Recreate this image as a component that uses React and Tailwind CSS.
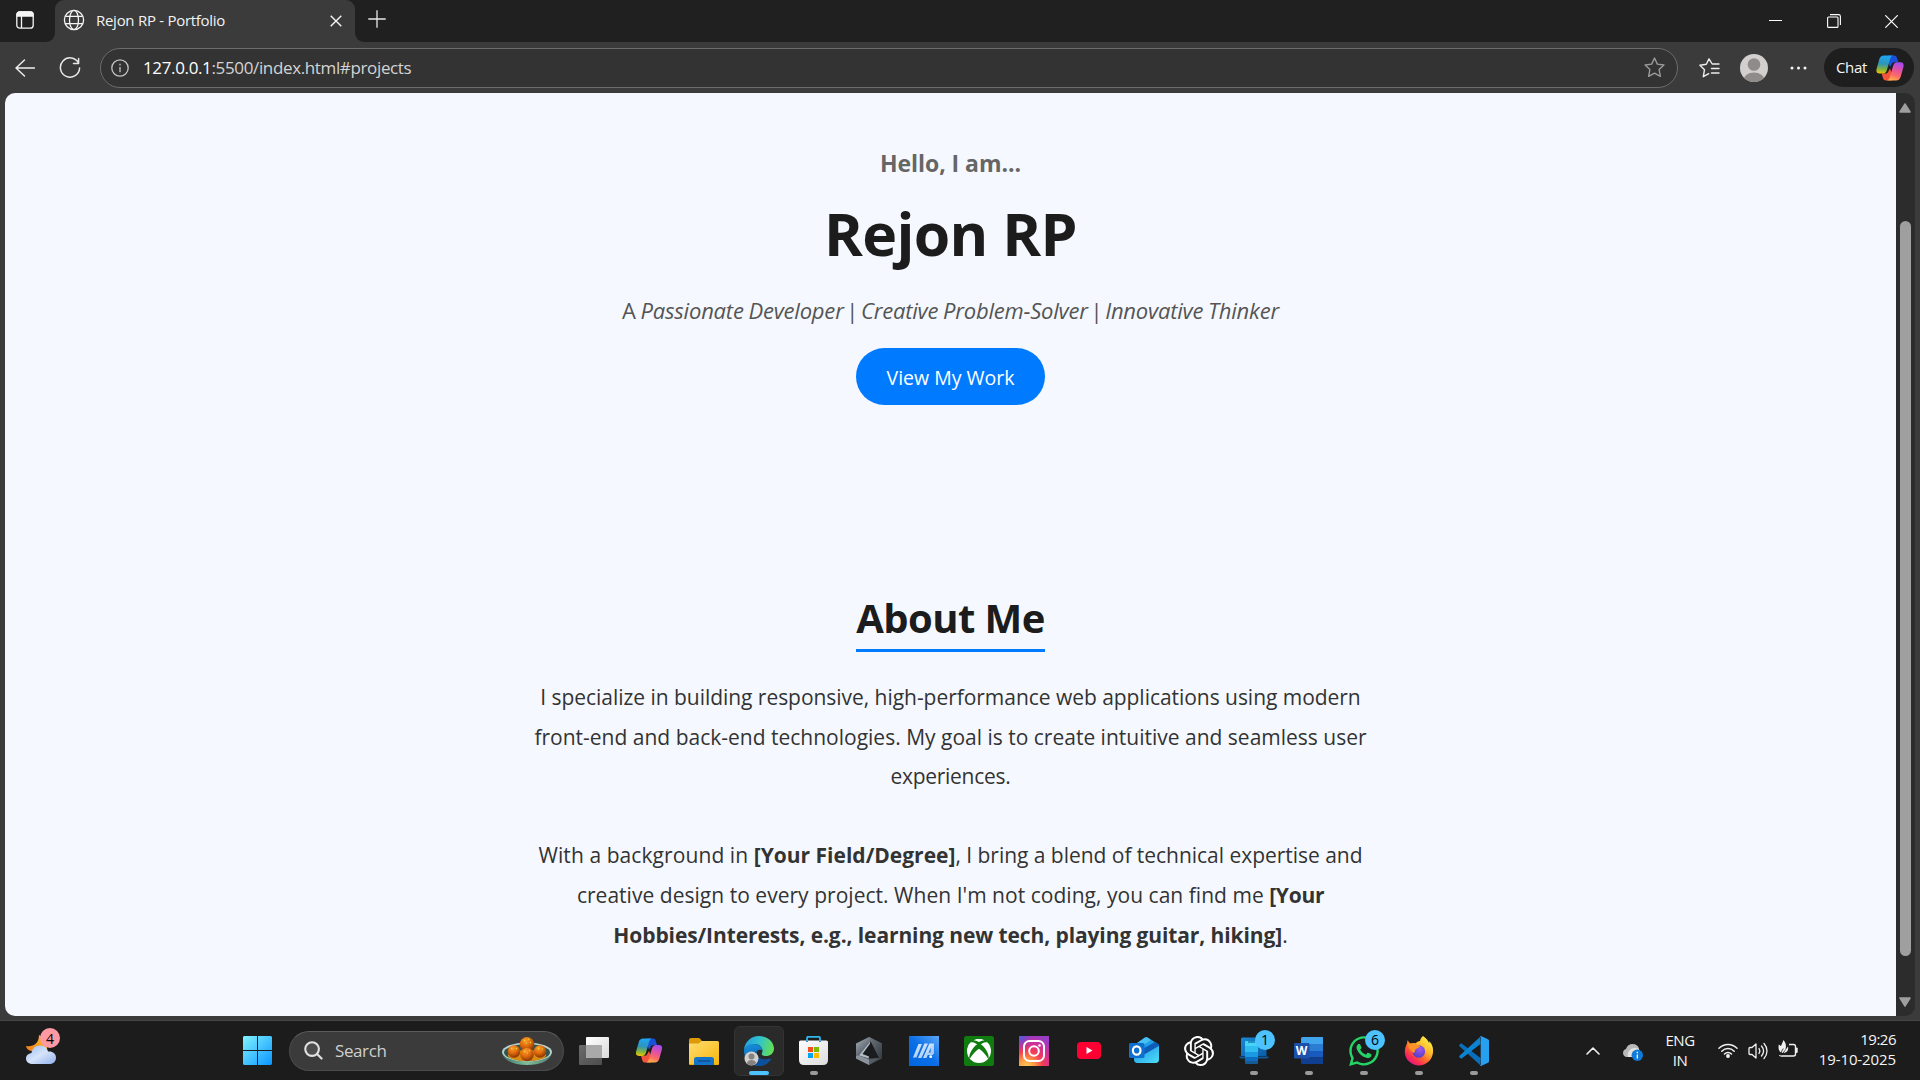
import { SiOpenai } from "react-icons/si";
import { FaWhatsapp } from "react-icons/fa";

function CopilotLogo({ id, className }) {
  return (
    <svg viewBox="0 0 28 26" className={className}>
      <defs>
        <linearGradient id={id + "a"} x1="0.3" y1="0" x2="0.2" y2="1">
          <stop offset="0.05" stopColor="#1fa5ee" />
          <stop offset="0.45" stopColor="#2f94b8" />
          <stop offset="0.75" stopColor="#84b43c" />
          <stop offset="1" stopColor="#f2c500" />
        </linearGradient>
        <linearGradient id={id + "b"} x1="0.7" y1="0" x2="0.4" y2="1">
          <stop offset="0" stopColor="#a24bf0" />
          <stop offset="0.45" stopColor="#e8529c" />
          <stop offset="0.75" stopColor="#fb6f62" />
          <stop offset="1" stopColor="#ffae4d" />
        </linearGradient>
      </defs>
      <path d="M12 .5h6c1.800 0 2.500.8 3 2.500l1.300 4.300h-3.300c-2 0-3 .8-3.600 2.500L14 12 11 4z" fill="#1b50d8" />
      <path d="M16 25.500h-6c-1.800 0-2.600-1-3.100-2.700L5.700 18.500H9c2 0 3-.8 3.600-2.600l1.400-2.400 3 8z" fill="#f4533e" />
      <path d="M8 .5h9c-1.800.6-2.500 2.200-3 4l-3 10.200c-.8 2.700-2 3.900-4.200 3.900H3.600C.8 18.600-.1 16.600.6 14L3.300 4.300C4 1.900 5.500.5 8 .5z" fill={"url(#" + id + "a)"} />
      <path d="M20 25.500h-9c1.800-.6 2.500-2.200 3-4l3-10.300c.8-2.700 2-3.900 4.200-3.900h3.200c2.800 0 3.700 2 3 4.600l-2.700 9.800c-.7 2.400-2.200 3.800-4.700 3.800z" fill={"url(#" + id + "b)"} />
    </svg>
  );
}

function TabBar() {
  return (
    <div className="flex h-[42px] bg-[#3b3b3b]">
      <div className="flex w-[55px] items-center rounded-br-[9px] bg-[#202020] pl-4">
        <svg viewBox="0 0 18 18" className="-mt-0.5 size-[18px]" fill="none" stroke="#f5f5f5" strokeWidth="1.3">
          <rect x=".8" y=".8" width="16.400" height="16.400" rx="3" />
          <path d="M1 3.500c0-1.500 1-2.500 2.500-2.500h11C16 1 17 2 17 3.500V5H1z" fill="#f5f5f5" />
          <path d="M5.500 5v12" />
        </svg>
      </div>
      <div className="flex w-[300px] bg-[#202020]">
        <div className="flex w-full items-center rounded-t-[9px] bg-[#3b3b3b] pr-[13px] pb-0.5 pl-2">
          <svg viewBox="0 0 22 22" className="size-[22px]" fill="none" stroke="#f5f5f5" strokeWidth="1.300">
            <circle cx="11" cy="11" r="9.600" />
            <ellipse cx="11" cy="11" rx="4.500" ry="9.600" />
            <path d="M2.500 7.300h17M2.500 14.700h17" />
          </svg>
          <span className="ml-[11px] text-[15px] tracking-[-0.28px] text-[#f2f2f2]">Rejon RP - Portfolio</span>
          <svg viewBox="0 0 12 12" className="mt-px ml-auto size-3" fill="none" stroke="#f5f5f5" strokeWidth="1.4">
            <path d="M.7.700l10.600 10.600M11.300.700L.7 11.300" />
          </svg>
        </div>
      </div>
      <div className="flex flex-1 items-center rounded-bl-[9px] bg-[#202020] pl-[13px]">
        <svg viewBox="0 0 18 18" className="-mt-1 size-[18px]" stroke="#e8e8e8" strokeWidth="1.3">
          <path d="M9 .300v17.400M.3 9h17.400" />
        </svg>
        <div className="ml-auto flex items-center pr-[22px]">
          <svg viewBox="0 0 13 13" className="size-[13px]" stroke="#fff" fill="none"><path d="M0 5.500h13" /></svg>
          <svg viewBox="0 0 14 14" className="ml-[45px] size-[14px]" stroke="#fff" fill="none" strokeWidth="1.100">
            <rect x=".6" y="3" width="10.400" height="10.400" rx="1" />
            <path d="M3 .600h8.500q1.900 0 1.900 1.900V11" />
          </svg>
          <svg viewBox="0 0 13 13" className="ml-[44px] size-[13px]" stroke="#fff" fill="none" strokeWidth="1.200">
            <path d="M.3.300l12.400 12.400M12.700.300L.3 12.700" />
          </svg>
        </div>
      </div>
    </div>
  );
}

function Toolbar() {
  return (
    <div className="flex h-[51px] items-center bg-[#3b3b3b] pr-[6px] pl-[15px]">
      <svg viewBox="0 0 20 18" className="h-[18px] w-5" fill="none" stroke="#f0f0f0" strokeWidth="1.400" strokeLinecap="round" strokeLinejoin="round">
        <path d="M9.500 1L1 9l8.500 8M1.500 9h18" />
      </svg>
      <svg viewBox="0 0 22 22" className="ml-6 size-[22px]" fill="none" stroke="#e8e8e8" strokeWidth="1.500" strokeLinecap="round" strokeLinejoin="round">
        <path d="M19.500 6A9.600 9.600 0 1 0 20.600 11M19.600 1.500V6.500H14.500" />
      </svg>
      <div className="ml-[19px] flex h-10 w-[1578px] items-center rounded-full border border-[#6c6c6c] bg-[#333333] pr-3 pl-[10px]">
        <svg viewBox="0 0 18 18" className="size-[18px]" fill="none" stroke="#c4c4c4" strokeWidth="1.300">
          <circle cx="9" cy="9" r="8.200" />
          <path d="M9 8v5.200M9 4.800v1.600" />
        </svg>
        <span className="ml-[14px] text-[17px] tracking-[-0.36px] text-[#d4d4d4]">
          <span className="text-white">127.0.0.1</span>:5500/index.html#projects
        </span>
        <svg viewBox="0 0 20 20" className="ml-auto size-[21px]" fill="none" stroke="#9b9b9b" strokeWidth="1.300" strokeLinejoin="round">
          <path d="M10 1l2.700 5.800 6.300.8-4.600 4.400 1.200 6.400L10 15.300l-5.600 3.100 1.200-6.400L1 7.600l6.300-.8z" />
        </svg>
      </div>
      <svg viewBox="0 0 21 20" className="ml-[21px] h-5 w-[21px]" fill="none" stroke="#ededed" strokeWidth="1.400" strokeLinejoin="round" strokeLinecap="round">
        <path d="M20 6h-6.800L10 .900 7.300 6.200.9 7.200l4.600 4.500-1.200 7 5.400-3M12.500 10.500H20M12.500 15H20" />
      </svg>
      <svg viewBox="0 0 28 28" className="ml-[20px] size-[28px]">
        <clipPath id="person"><circle cx="14" cy="14" r="14" /></clipPath>
        <g clipPath="url(#person)">
          <rect width="28" height="28" fill="#d2d0ce" />
          <circle cx="14" cy="10.500" r="6.300" fill="#8f8b88" />
          <ellipse cx="14" cy="26" rx="10.500" ry="7.500" fill="#8f8b88" />
        </g>
      </svg>
      <svg viewBox="0 0 17 4" className="ml-[22px] h-1 w-[17px]" fill="#f5f5f5">
        <circle cx="2" cy="2" r="1.500" /><circle cx="8.500" cy="2" r="1.500" /><circle cx="15" cy="2" r="1.500" />
      </svg>
      <div className="ml-auto flex h-[39px] w-[90px] items-center rounded-full bg-[#1e1e1e] pl-3">
        <span className="text-[15px] tracking-[-0.33px] text-[#f5f5f5]">Chat</span>
        <CopilotLogo id="chat" className="ml-[9px] h-[26px] w-7" />
      </div>
    </div>
  );
}

function Portfolio() {
  return (
    <main className="flex w-[1891px] flex-col items-center overflow-hidden rounded-l-[10px] bg-[#f5f9ff] text-[#333333]">
      <p className="mt-[52px] text-[23px]/[36px] font-bold tracking-[-0.05px] text-[#666666]">Hello, I am...</p>
      <h1 className="mt-[12px] text-[59px]/[80px] font-bold tracking-[-0.7px] text-[#1c1c1c]">Rejon RP</h1>
      <p className="mt-[17px] text-[22px]/[40px] tracking-[-0.2px] [word-spacing:-0.8px] whitespace-nowrap text-[#555555]">
        A <i>Passionate Developer</i><span className="mx-[-2px]"> | </span><i>Creative Problem-Solver</i><span className="mx-[-2px]"> | </span><i>Innovative Thinker</i>
      </p>
      <button className="mt-[18px] h-[57px] w-[189px] rounded-full bg-[#007bff] pt-[3px] text-[19.5px] text-white">View My Work</button>
      <h2 className="mt-[185px] border-b-3 border-[#007bff] pb-[3px] text-[40px]/[56px] font-bold tracking-[-0.58px] text-[#1c1c1c]">About Me</h2>
      <div className="mt-[26px] text-center text-[21px]/[39.6px] whitespace-nowrap">
        <p>
          <span className="tracking-[-0.04px]">I specialize in building responsive, high-performance web applications using modern</span>
          <br />
          front-end and back-end technologies. My goal is to create intuitive and seamless user
          <br />
          <span className="tracking-[-0.3px]">experiences.</span>
        </p>
        <p className="mt-[39.6px]">
          <span className="tracking-[0.08px]">With a background in </span><b>[Your Field/Degree]</b><span className="tracking-[-0.03px]">, I bring a blend of technical expertise and</span>
          <br />
          <span className="tracking-[0.03px]">creative design to every project. When I'm not coding, you can find me </span><b className="tracking-[-0.3px]">[Your</b>
          <br />
          <b className="tracking-[-0.1px]">Hobbies/Interests, e.g., learning new tech, playing guitar, hiking]</b>.
        </p>
      </div>
    </main>
  );
}

function Scrollbar() {
  return (
    <div className="flex w-[19px] flex-col items-center rounded-r-[10px] bg-[#2c2c2c] pt-[10px] pb-[9px]">
      <svg viewBox="0 0 12 10" className="mr-px h-[10px] w-3" fill="#9f9f9f" stroke="#9f9f9f" strokeWidth="1.500" strokeLinejoin="round"><path d="M6 1l5 8H1z" /></svg>
      <div className="mt-[108px] h-[735px] w-[11px] rounded-full bg-[#9f9f9f]" />
      <svg viewBox="0 0 12 10" className="mt-auto mr-px h-[10px] w-3" fill="#9f9f9f" stroke="#9f9f9f" strokeWidth="1.500" strokeLinejoin="round"><path d="M6 9L1 1h10z" /></svg>
    </div>
  );
}

function SearchBox() {
  return (
    <div className="flex h-10 w-[275px] items-center rounded-full border border-[#4b4b4b] border-t-[#5c5c5c] bg-[#3b3b3b] pr-[11px] pl-[14px]">
      <svg viewBox="0 0 20 20" className="-mt-px size-[19px]" fill="none" stroke="#e2e2e2" strokeWidth="2.200" strokeLinecap="round">
        <circle cx="8.500" cy="8.500" r="7.200" fill="#4d4d4d" /><path d="M14 14l4.500 4.500" />
      </svg>
      <span className="ml-3 text-[17px] tracking-[-0.4px] text-[#cfcfcf]">Search</span>
      <svg viewBox="0 0 50 28" className="ml-auto h-7 w-[50px]">
        <defs>
          <radialGradient id="ball" cx=".4" cy=".25" r=".8">
            <stop offset="0" stopColor="#ff9d2c" /><stop offset=".5" stopColor="#dd690c" /><stop offset="1" stopColor="#7c2c02" />
          </radialGradient>
          <linearGradient id="bowl"><stop offset="0" stopColor="#3d6f66" /><stop offset=".5" stopColor="#7fc09a" /><stop offset="1" stopColor="#55776f" /></linearGradient>
        </defs>
        <path d="M0 15C1 24 12 28 25 28s24-4 25-13z" fill="url(#bowl)" />
        <ellipse cx="25" cy="15" rx="25" ry="9.500" fill="#b9d2cd" />
        <ellipse cx="25" cy="15.500" rx="23" ry="8.300" fill="#31564f" />
        <ellipse cx="25" cy="18.500" rx="19" ry="5.500" fill="#d98c10" />
        <circle cx="12" cy="14.500" r="6.200" fill="url(#ball)" />
        <circle cx="38" cy="14.500" r="6.200" fill="url(#ball)" />
        <circle cx="25" cy="7.300" r="7.300" fill="url(#ball)" />
        <circle cx="25" cy="17.500" r="6.800" fill="url(#ball)" />
        <path d="M22 3l1 1M26 2l1 1M24 6l1 .5M29 5l-1 1M9 11l1 1M14 11l1 1M36 11l1 1M40 12l1 0M22 14l1 1M27 13l1 1M25 16l1 0" stroke="#e6d33c" strokeWidth="1.200" />
      </svg>
    </div>
  );
}

function Cell({ active, running, badge, children }) {
  return (
    <div className={active ? "relative flex size-[50px] items-center justify-center rounded-md border border-[#343434] bg-[#2a2a2a]" : "relative flex size-[50px] items-center justify-center"}>
      {children}
      {badge && <span className="absolute top-1 right-1 flex size-5 items-center justify-center rounded-full bg-[#4cc2ff] text-[14px] text-black">{badge}</span>}
      {active && <span className="absolute bottom-0 h-1 w-5 rounded-full bg-[#4cc2ff]" />}
      {running && <span className="absolute bottom-px h-1 w-2 rounded-full bg-[#9a9a9a]" />}
    </div>
  );
}

function TaskView() {
  return (
    <svg viewBox="0 0 30 28" className="h-7 w-[30px]">
      <defs>
        <linearGradient id="tv" x2="1" y2="1"><stop stopColor="#fff" /><stop offset="1" stopColor="#dadada" /></linearGradient>
        <linearGradient id="tvd" y2="1"><stop stopColor="#6b6b6b" /><stop offset="1" stopColor="#4d4d4d" /></linearGradient>
      </defs>
      <rect y="8" width="23" height="20" rx="1" fill="url(#tvd)" />
      <rect x="7" width="23" height="21" rx="1" fill="url(#tv)" />
      <path d="M7 8h15q1 0 1 1v12H8q-1 0-1-1z" fill="#a9a9a9" />
    </svg>
  );
}

function Explorer() {
  return (
    <svg viewBox="0 0 30 27" className="mt-px h-[27px] w-[30px]">
      <defs><linearGradient id="fo" x2="1" y2="1"><stop stopColor="#ffdd70" /><stop offset="1" stopColor="#f7b60d" /></linearGradient></defs>
      <path d="M0 2q0-2 2-2h7.500q1 0 1.800 1L13 3v5H0z" fill="#dd9a05" />
      <path d="M0 5.500h9.500L13 3h15.500Q30 3 30 4.500V26H0z" fill="url(#fo)" />
      <path d="M5 27v-5.500Q5 19 7.500 19h15Q25 19 25 21.500V27z" fill="#1273c9" />
      <path d="M9 23h12" stroke="#0b4f91" strokeWidth="1.400" />
      <path d="M0 26h5v1H1q-1 0-1-1zM25 26h5q0 1-1 1h-4z" fill="#f0b00c" />
    </svg>
  );
}

function Edge() {
  return (
    <svg viewBox="0 0 30 30" className="size-[30px]">
      <defs>
        <linearGradient id="e1" x1="0" y1=".4" x2="1" y2=".6"><stop stopColor="#249fe0" /><stop offset=".45" stopColor="#2fc2cf" /><stop offset="1" stopColor="#66e04f" /></linearGradient>
        <linearGradient id="e2" x1=".2" y1="0" x2=".5" y2="1"><stop stopColor="#168fdc" /><stop offset="1" stopColor="#0c59a4" /></linearGradient>
      </defs>
      <path d="M0 15C0 10 5 8 9 8c6 0 9.500 3 9.500 6-4-1-6 .5-6 3 0 5 6 8.500 15 5.500C25 27 20.500 30 15 30 6.500 30 0 23.500 0 15z" fill="url(#e2)" />
      <path d="M12.500 15.500c-1 5 3.500 10 14.500 7.500-3 5-8 7-12 7-5-2-7.500-6-6.500-10 .5-2.500 2-4 4-4.500z" fill="#0e4f9b" />
      <path d="M0 14C.5 6 7 0 15 0c9 0 15 6.500 15 12.500 0 5-4 7.500-8 7.500-3 0-5-1-4-3 1.500-3 0-9-8-9C5 8 1 10.500 0 14z" fill="url(#e1)" />
      <circle cx="7.500" cy="22.500" r="7" fill="#d2d0ce" />
      <circle cx="7.500" cy="20.500" r="3" fill="#85827f" />
      <path d="M2.800 27c.8-2 2.500-3 4.700-3s4 1 4.700 3c-2.500 3-7 3-9.400 0z" fill="#85827f" />
    </svg>
  );
}

function Store() {
  return (
    <svg viewBox="0 0 29 29" className="mr-px size-[29px]">
      <defs><linearGradient id="st" y2="1"><stop stopColor="#fff" /><stop offset="1" stopColor="#dcdcdc" /></linearGradient></defs>
      <path d="M8 6V2Q8 .800 9.200.800h10.600Q21 .800 21 2v4" fill="none" stroke="#2fb6ea" strokeWidth="1.800" />
      <path d="M0 6q0-1.500 1.500-1.500h26Q29 4.500 29 6v18q0 5-5 5H5q-5 0-5-5z" fill="url(#st)" />
      <path d="M8 4.500v1.500M21 4.500v1.500" stroke="#1b7fc4" strokeWidth="1.800" />
      <path d="M9 11h5v5H9z" fill="#f25022" /><path d="M15 11h5v5h-5z" fill="#7fba00" />
      <path d="M9 17h5v5H9z" fill="#00a4ef" /><path d="M15 17h5v5h-5z" fill="#ffb900" />
    </svg>
  );
}

function Armoury() {
  return (
    <svg viewBox="0 0 26 28" className="h-7 w-[26px]">
      <defs>
        <linearGradient id="ar" x2=".9" y2="1"><stop stopColor="#aab3bc" /><stop offset=".45" stopColor="#59616a" /><stop offset="1" stopColor="#3a4047" /></linearGradient>
        <linearGradient id="ar2" y2="1"><stop stopColor="#6f7881" /><stop offset="1" stopColor="#343a40" /></linearGradient>
      </defs>
      <path d="M13 0l13 6.500v15L13 28 0 21.500v-15z" fill="url(#ar)" />
      <path d="M13 0l13 6.500v15l-3-1L14.500 3.500z" fill="url(#ar2)" />
      <path d="M14.500 4L3 19l9.500 2.500L23 21z" fill="#1a1c1f" />
      <path d="M3 18.500L14.500 4l-.7 3L6.500 17l6.500 2.500-.3 2z" fill="#b4bcc4" />
      <path d="M0 19l3-.5 10 4V28L0 21.500z" fill="#8a939c" />
      <path d="M13 22.500L23 21l-10 7z" fill="#565d65" />
    </svg>
  );
}

function MyAsus() {
  return (
    <svg viewBox="0 0 30 30" className="size-[30px]">
      <defs>
        <linearGradient id="as" x1="0" y1="1" x2="1" y2="0"><stop stopColor="#0067e0" /><stop offset=".5" stopColor="#0b6fe6" /><stop offset="1" stopColor="#5aa7fa" /></linearGradient>
        <linearGradient id="as2" y2="1"><stop stopColor="#fff" /><stop offset="1" stopColor="#7db4f2" /></linearGradient>
      </defs>
      <path d="M0 0h30v30H0z" fill="url(#as)" />
      <path d="M9.500 8H13L7.500 21.500H4z" fill="url(#as2)" />
      <path d="M15.500 7.500H19L12.500 22H9z" fill="url(#as2)" />
      <path d="M20.500 7.500H25V18h-3.300v-6.500L17.500 22H14z" fill="url(#as2)" />
      <path d="M18.500 16.500H24V19h-6.500z" fill="#a9cdf7" />
      <circle cx="21.700" cy="20.700" r="1.400" fill="#fff" />
    </svg>
  );
}

function Xbox() {
  return (
    <svg viewBox="0 0 30 30" className="size-[30px]">
      <rect width="30" height="30" rx="2.500" fill="#107c10" />
      <circle cx="15" cy="15" r="12" fill="#fff" />
      <path d="M6.500 6.300C10 5.500 13 8 15 9.800c2-1.800 5-4.300 8.500-3.500L20.500 3 15 4.800 9.500 3z" fill="#107c10" />
      <path d="M11.500 9.500C7.500 13.500 4.500 19 5.500 23.200 8 18.500 12 14.500 15 12.700c3 1.800 7 5.800 9.500 10.500 1-4.200-2-9.700-6-13.700L15 7z" fill="#107c10" />
      <path d="M9.500 4.300Q15 1.500 20.500 4.300 18 4.300 15 6 12 4.300 9.500 4.300z" fill="#fff" />
    </svg>
  );
}

function Instagram() {
  return (
    <svg viewBox="0 0 30 30" className="size-[30px]">
      <defs>
        <radialGradient id="ig" cx=".25" cy="1.050" r="1.100"><stop stopColor="#ffd25c" /><stop offset=".25" stopColor="#ff9a42" /><stop offset=".5" stopColor="#f43d55" /><stop offset=".75" stopColor="#d32f97" /><stop offset="1" stopColor="#9a3cc4" /></radialGradient>
        <radialGradient id="ig2" cx="0" cy="0" r=".5"><stop stopColor="#3f62dd" /><stop offset="1" stopColor="#7a3fc8" stopOpacity="0" /></radialGradient>
      </defs>
      <path d="M0 0h30v30H0z" fill="url(#ig)" /><path d="M0 0h30v30H0z" fill="url(#ig2)" />
      <g fill="none" stroke="#fff" strokeWidth="2"><rect x="5" y="5" width="20" height="20" rx="5.500" /><circle cx="15" cy="15" r="4.800" /></g>
      <circle cx="20.500" cy="9.500" r="1.300" fill="#fff" />
    </svg>
  );
}

function YouTube() {
  return (
    <svg viewBox="0 0 24 17" className="h-[17px] w-6">
      <rect width="24" height="17" rx="4" fill="#ff0033" /><path d="M9.500 5l6 3.500-6 3.500z" fill="#fff" />
    </svg>
  );
}

function Outlook() {
  return (
    <svg viewBox="0 0 30 27" className="h-[27px] w-[30px]">
      <defs><linearGradient id="ol" x2="1" y2="1"><stop stopColor="#1c8fe0" /><stop offset="1" stopColor="#4fe0fb" /></linearGradient></defs>
      <path d="M5 8L16 .500q1-.7 2.500 0L29 7q1 .700 1 2v13q0 4-4 4H9q-4 0-4-4z" fill="#1f9fe8" />
      <path d="M7 7L16 .500q1-.7 2.500 0L22 3 9 12z" fill="#48c0f2" />
      <path d="M10 14L26 5l3 2q1 .700 1 2L15 18z" fill="#0f5cb8" />
      <path d="M5 20l11-3L30 9v13q0 4-4 4H9q-4 0-4-4z" fill="url(#ol)" />
      <rect y="6" width="15.500" height="15" rx="1.500" fill="#0f6fd1" />
      <ellipse cx="7.700" cy="13.500" rx="3.800" ry="4.200" fill="none" stroke="#fff" strokeWidth="2.200" />
    </svg>
  );
}

function PhoneLink() {
  return (
    <svg viewBox="0 0 30 27" className="h-[27px] w-[30px]">
      <defs><linearGradient id="pl" y2="1"><stop stopColor="#1989d6" /><stop offset="1" stopColor="#0a5ca8" /></linearGradient></defs>
      <path d="M2 2q0-1.500 1.500-1.500h24V19H2z" fill="url(#pl)" />
      <path d="M0 19.500h30l-1.500 2h-27z" fill="#0d5a9e" />
      <rect x="6" y="4" width="13" height="23" rx="1" fill="#155a92" />
      <path d="M6 9h13v6H6z" fill="#31bdf0" /><path d="M6 4.500q0-.5.500-.5h12q.5 0 .5.500V9H6z" fill="#45d4f7" />
      <path d="M6 15h13v5H6z" fill="#1b98e4" /><path d="M6 20h13v4H6z" fill="#0c6dc0" />
      <path d="M9 5h7" stroke="#0e679e" strokeWidth="1.200" />
    </svg>
  );
}

function Word() {
  return (
    <div className="relative mr-px h-[27px] w-[29px]">
      <svg viewBox="0 0 29 27" className="h-[27px] w-[29px]">
        <path d="M7 1.500Q7 0 8.500 0H29v7H7z" fill="#41a5ee" /><path d="M7 7h22v7H7z" fill="#2b7cd3" />
        <path d="M7 14h22v6.500H7z" fill="#185abd" /><path d="M7 20.500h22V27H8.500Q7 27 7 25.500z" fill="#103f91" />
        <rect y="6" width="15.500" height="15.500" rx="1.200" fill="#1b50ab" />
      </svg>
      <span className="absolute top-[6px] left-0 w-[15px] text-center text-[12px]/[15px] font-bold text-white">W</span>
    </div>
  );
}

function Firefox() {
  return (
    <svg viewBox="0 0 30 30" className="size-[30px]">
      <defs>
        <linearGradient id="fx" x1=".85" y1=".1" x2=".2" y2=".95"><stop stopColor="#fff04a" /><stop offset=".35" stopColor="#ffb52a" /><stop offset=".6" stopColor="#ff6a2e" /><stop offset=".82" stopColor="#f92b55" /><stop offset="1" stopColor="#e31587" /></linearGradient>
        <radialGradient id="fo2" cx=".6" cy=".3" r=".8"><stop stopColor="#a257ee" /><stop offset="1" stopColor="#4a3bc0" /></radialGradient>
      </defs>
      <path d="M19 0c4 2.500 5 5 6.500 7.500L25 5c3.500 3 4.500 7.500 4 11.500C28.300 24 22 29.500 15 29.500S1.200 24 .8 16.500C.6 12.500 2 9.500 3 7.500l.5-3.200L6 7.500c2-.8 4-.7 5.500-.3C13 6 14 5.200 16 5c.3-2 1.500-3.800 3-5z" fill="url(#fx)" />
      <circle cx="14.800" cy="15.500" r="6.300" fill="url(#fo2)" />
      <path d="M4 8.500c3-1.500 6-1 8 0 1.500.8 3 1 4 1.500-.5 2-3.500 2.300-4.500 3.500-.7 1-.2 2-1.500 3.500C6 15 4 12 4 8.500z" fill="#ff9226" />
      <path d="M16 5c3.500 1.500 6.500 5 5.500 10 3-3 3-8-5.500-10z" fill="#ffcf38" />
    </svg>
  );
}

function VSCode() {
  return (
    <svg viewBox="0 0 30 30" className="size-[30px]">
      <path d="M21.500 22L3 7.700q-.8-.6-1.500 0l-1 1q-.8.800 0 1.600L21 29z" fill="#0a6fbb" />
      <path d="M21.500 8L3 22.300q-.8.600-1.500 0l-1-1q-.8-.8 0-1.600L21 1z" fill="#0b83cf" />
      <path d="M21 .300q.700-.4 1.500 0L29 3.200q1 .5 1 1.600v20.400q0 1.100-1 1.600l-6.500 2.900q-.8.400-1.500 0 .7-.4.700-1.700V2q0-1.200-.7-1.700z" fill="#27a0f2" />
    </svg>
  );
}

function Weather() {
  return (
    <div className="relative mt-[8px] h-[36px] w-[34px] self-start">
      <svg viewBox="0 0 34 36" className="h-9 w-[34px]">
        <defs>
          <linearGradient id="cl" y2="1"><stop stopColor="#9bbcf0" /><stop offset=".5" stopColor="#d6e4fb" /><stop offset="1" stopColor="#8fb0ea" /></linearGradient>
          <linearGradient id="mo" x1="1" y2="1" x2="0"><stop stopColor="#ffc425" /><stop offset="1" stopColor="#f07a1a" /></linearGradient>
        </defs>
        <path d="M13 6c6 3 9 8 8 16H7C3 22 .5 20 0 17c7 1 13-2 13-11z" fill="url(#mo)" />
        <path d="M6.500 35C2.500 35 0 32.500 0 29.500S2.300 24.500 5.500 24C6 19.500 9.500 16.500 14 16.500c4 0 7 2 8 6 4.500-.5 8 2 8 6s-2.500 6.500-6.500 6.500z" fill="url(#cl)" />
      </svg>
      <span className="absolute -top-px right-0 flex size-5 items-center justify-center rounded-full bg-[#ff99a4] text-[14px] text-black">4</span>
    </div>
  );
}

function Tray() {
  return (
    <div className="ml-auto flex items-center text-[15px]/[20px] text-[#f5f5f5]">
      <svg viewBox="0 0 14 8" className="h-2 w-[14px]" fill="none" stroke="#f0f0f0" strokeWidth="1.600" strokeLinecap="round" strokeLinejoin="round"><path d="M1 7l6-6 6 6" /></svg>
      <svg viewBox="0 0 20 18" className="mt-[3px] ml-[23px] h-[18px] w-5">
        <path d="M4 14c-2.500 0-4-1.700-4-4 0-2 1.200-3.500 3-4C4 2.500 6.500 1 9.500 1c3.500 0 5.500 1.500 6.500 4.500L12 14z" fill="#b9b9b9" />
        <path d="M5 14c-1-3 0-6 3-8 2.500-1.500 6-1.500 8 0l1 4-6 4z" fill="#e2e2e2" />
        <circle cx="14.300" cy="12.200" r="5.700" fill="#0f7ad8" />
        <path d="M14.300 11.500v4M14.300 8.800v1.500" stroke="#fff" strokeWidth="1.300" />
      </svg>
      <div className="-mt-px ml-[22px] text-center tracking-[-0.4px]"><div>ENG</div><div>IN</div></div>
      <svg viewBox="0 0 20 15" className="ml-[23px] h-[15px] w-5" fill="none" stroke="#f0f0f0" strokeWidth="1.500" strokeLinecap="round">
        <path d="M1 5.200c5-5 13-5 18 0M3.800 8.200c3.500-3.500 8.900-3.500 12.400 0M6.500 11c2-2 5-2 7 0" /><circle cx="10" cy="13" r="1.200" fill="#f0f0f0" />
      </svg>
      <svg viewBox="0 0 20 18" className="ml-[10px] h-[18px] w-5" fill="none" stroke="#f0f0f0" strokeWidth="1.300" strokeLinecap="round" strokeLinejoin="round">
        <path d="M1 6.500q0-1 1-1h2L8 2v14l-4-3.500H2q-1 0-1-1z" /><path d="M11 6.500c1 1.500 1 3.500 0 5M13.500 4c2.500 3 2.500 7 0 10M16 1.500c4 4.500 4 10.500 0 15" />
      </svg>
      <svg viewBox="0 0 20 18" className="-mt-[3px] ml-[10px] h-[18px] w-5" fill="none" stroke="#f0f0f0" strokeWidth="1.400" strokeLinejoin="round">
        <path d="M11 4.500h4.500q2 0 2 2v7.500q0 2-2 2H3.500q-1.500 0-2-1" /><path d="M18.700 8.500v3.500" strokeWidth="2" strokeLinecap="round" />
        <path d="M5.500 0c2.500 3 3 5.500 2 9.500L4.500 13C1 12 0 9 .8 4.500L3 6z" fill="#f0f0f0" stroke="none" />
        <path d="M3 15.500c0-3 .8-5 2.300-7" stroke="#1c1c1c" strokeWidth=".8" />
        <path d="M10 6.500c.7 3.500-.8 6-4.500 6.500z" fill="#f0f0f0" stroke="none" />
      </svg>
      <div className="-mt-1 ml-[21px] text-right"><div className="tracking-[-0.5px]">19:26</div><div className="tracking-[-0.1px]">19-10-2025</div></div>
    </div>
  );
}

function Taskbar() {
  return (
    <div className="flex h-[59px] items-center bg-[#1c1c1c] pr-6 pl-[26px]">
      <Weather />
      <svg viewBox="0 0 29 29" className="-mt-px ml-[183px] size-[29px]">
        <defs><linearGradient id="win" gradientUnits="userSpaceOnUse" x1="0" y1="0" x2="29" y2="29"><stop stopColor="#82f3ff" /><stop offset="1" stopColor="#0a95ff" /></linearGradient></defs>
        <path d="M1 0h13v14H0V1zM15 0h13l1 1v13H15zM0 15h14v14H1l-1-1zM15 15h14v13l-1 1H15z" fill="url(#win)" />
      </svg>
      <div className="ml-[17px] flex items-center gap-[5px]">
        <SearchBox />
        <Cell><TaskView /></Cell>
        <Cell><CopilotLogo id="task" className="h-[25px] w-7" /></Cell>
        <Cell><Explorer /></Cell>
        <Cell active><Edge /></Cell>
        <Cell running><Store /></Cell>
        <Cell><Armoury /></Cell>
        <Cell><MyAsus /></Cell>
        <Cell><Xbox /></Cell>
        <Cell><Instagram /></Cell>
        <Cell><YouTube /></Cell>
        <Cell><Outlook /></Cell>
        <Cell><SiOpenai className="size-[30px] text-white" /></Cell>
        <Cell running badge="1"><PhoneLink /></Cell>
        <Cell running><Word /></Cell>
        <Cell running badge="6"><FaWhatsapp className="size-[34px] text-[#25d366]" /></Cell>
        <Cell running><Firefox /></Cell>
        <Cell running><VSCode /></Cell>
      </div>
      <Tray />
    </div>
  );
}

export default function App() {
  return (
    <div className="flex h-[1080px] w-[1920px] flex-col overflow-hidden bg-[#3b3b3b] font-['Open_Sans',sans-serif]">
      <TabBar />
      <Toolbar />
      <div className="flex h-[923px] pl-[5px]">
        <Portfolio />
        <Scrollbar />
      </div>
      <div className="h-[5px] border-b border-[#454545] bg-[#3a3b3a]" />
      <Taskbar />
    </div>
  );
}
